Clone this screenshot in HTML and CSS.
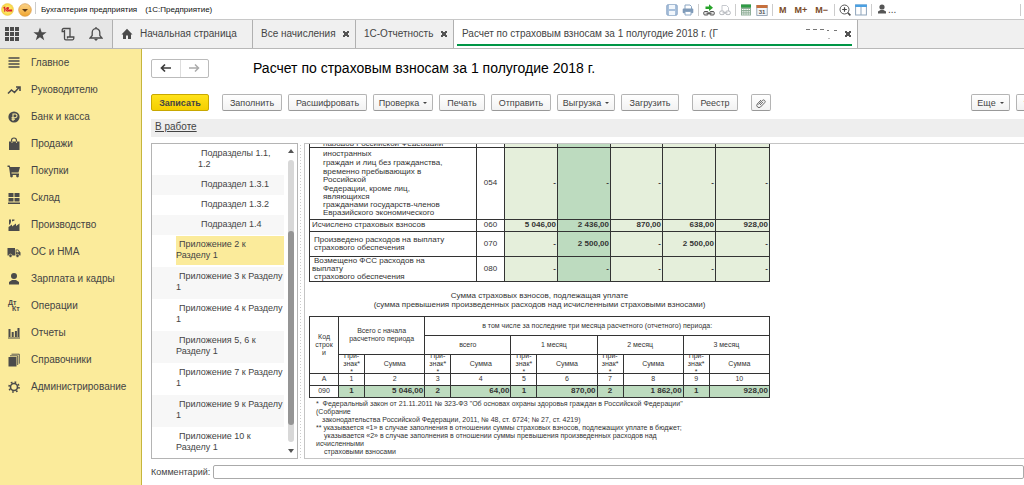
FILE: index.html
```html
<!DOCTYPE html>
<html lang="ru">
<head>
<meta charset="utf-8">
<title>Бухгалтерия предприятия</title>
<link rel="stylesheet" href="styles.css">
</head>
<body>
<header class="titlebar">
  <svg class="logo" viewBox="0 0 14 14"><defs><radialGradient id="gy"><stop offset="0" stop-color="#fff59a"/><stop offset="1" stop-color="#f8d53a"/></radialGradient><linearGradient id="go" x2="0" y2="1"><stop offset="0" stop-color="#fbd48a"/><stop offset="1" stop-color="#f0a52f"/></linearGradient></defs><circle cx="7" cy="7" r="6.5" fill="url(#gy)" stroke="#ecc75a" stroke-width=".6"/><path d="M2.500 5.600L4 4.600V9.300M8.600 5.600A1.900 1.900 0 1 0 7.600 8.700H12M8.300 6.400a.8.8 0 1 0-.6 1.100H12" fill="none" stroke="#d8202a" stroke-width="1.1"/></svg>
  <button class="menu-btn" aria-label="Главное меню"><svg viewBox="0 0 14 14"><circle cx="7" cy="7" r="6.3" fill="url(#go)" stroke="#d99a48" stroke-width=".7"/><path d="M4 6h6L7 9z" fill="#5c3a17"/></svg></button>
  <i class="bar"></i>
  <span class="app-name">Бухгалтерия предприятия</span><span class="app-kind">(1С:Предприятие)</span>
  <div class="sys-tools">
    <button aria-label="Сохранить"><svg viewBox="0 0 12 12"><rect x=".8" y=".8" width="10.4" height="10.4" rx="1" fill="#a9c1dc" stroke="#8aa6c6"/><path d="M3 1h6v4H3zM3 7h6v4H3z" fill="#f2f7fc"/></svg></button>
    <button aria-label="Печать"><svg viewBox="0 0 12 12"><path d="M3 5V1h5l1.500 1.500V5" fill="#fff" stroke="#8ba6c3"/><rect x=".7" y="4.600" width="10.600" height="4.600" rx="1" fill="#7f9ab8"/><path d="M3 7.500h6v3.500H3z" fill="#fff" stroke="#8ba6c3"/></svg></button>
    <i class="bar"></i>
    <button aria-label="Ссылка"><svg viewBox="0 0 12 12"><path d="M2.500 2.500h3.500V.2L10 3.700 6 7V5H2.500z" fill="#27a32a"/><rect x=".7" y="7.500" width="4.600" height="3.500" rx="1.200" fill="#ddd" stroke="#555"/><rect x="6.700" y="7.500" width="4.600" height="3.500" rx="1.200" fill="#ddd" stroke="#555"/><path d="M3.500 9.300h5" stroke="#555"/></svg></button>
    <button aria-label="Открыть ссылку"><svg viewBox="0 0 12 12"><path d="M3 7V1.500h4.500L9.500 3.500V7" fill="#fff" stroke="#c6c9ce"/><rect x=".7" y="7" width="4.600" height="3.600" rx="1.400" fill="none" stroke="#b3b6bb"/><rect x="6.700" y="7" width="4.600" height="3.600" rx="1.400" fill="none" stroke="#b3b6bb"/><path d="M3.500 8.800h5" stroke="#b3b6bb"/></svg></button>
    <i class="bar"></i>
    <button aria-label="Калькулятор"><svg viewBox="0 0 12 12"><rect x="1" y=".5" width="10" height="11" fill="#8fae97"/><path d="M1 .5h10v3H1z" fill="#2e9b45"/><path d="M2 5.500h8M2 7.800h8M2 10h8" stroke="#fff" stroke-dasharray="1.500 .7"/></svg></button>
    <button aria-label="Календарь"><svg viewBox="0 0 12 12"><rect x=".8" y="1.500" width="10.400" height="10" fill="#f4f7fa" stroke="#8496a8" stroke-width=".8"/><path d="M.5 1h11v3H.5z" fill="#c66f3c"/><text x="6" y="10.300" class="cal">31</text></svg></button>
    <i class="bar"></i>
    <button class="mem">M</button><button class="mem">M+</button><button class="mem">M−</button>
    <i class="bar"></i>
    <button aria-label="Масштаб"><svg viewBox="0 0 12 12"><circle cx="5.500" cy="5.500" r="4.500" fill="none" stroke="#555"/><path d="M3.200 5.500h4.600M5.500 3.200v4.600" stroke="#444" stroke-width="1.200"/><path d="M8.800 8.800l2.600 2.600" stroke="#444" stroke-width="1.600"/></svg></button>
    <button aria-label="Окна"><svg viewBox="0 0 12 12"><rect x=".6" y="1" width="10.800" height="10" fill="#fff" stroke="#8fa5bb"/><path d="M.1.500h11.800v2.500H.1z" fill="#4aa0e2"/><path d="M6 3v8" stroke="#8fa5bb"/></svg></button>
    <i class="bar"></i>
    <button class="user"><svg viewBox="0 0 12 12"><circle cx="6" cy="4" r="2.600" fill="#555"/><path d="M2 10.500V8.500L4.500 7h3L10 8.500v2z" fill="#555"/></svg>...</button>
    <i class="bar"></i>
  </div>
</header>
<nav class="tabs">
  <div class="quick">
    <button aria-label="Разделы"><svg viewBox="0 0 14 14" fill="#4b4b4b"><path d="M0 0h4v4H0zM5 0h4v4H5zM10 0h4v4h-4zM0 5h4v4H0zM5 5h4v4H5zM10 5h4v4h-4zM0 10h4v4H0zM5 10h4v4H5zM10 10h4v4h-4z"/></svg></button>
    <button aria-label="Избранное"><svg viewBox="0 0 14 14" fill="#4b4b4b"><path d="M7 .5l1.700 4.700h4.900L9.700 8.200l1.500 5L7 10.200l-4.200 3 1.500-5L.4 5.200h4.900z"/></svg></button>
    <button aria-label="История"><svg viewBox="0 0 14 14" fill="none" stroke="#4b4b4b" stroke-width="1.300"><path d="M3.500 4.500H1.200V3a1.500 1.500 0 0 1 1.500-1.500H9V10M3.500 3v8.500a1.300 1.300 0 0 0 1.300 1.300h6.500a1.500 1.500 0 0 0 1.500-1.500V10H6.500v1.500"/></svg></button>
    <button aria-label="Уведомления"><svg viewBox="0 0 14 14" fill="none" stroke="#4b4b4b" stroke-width="1.300"><path d="M1 11h12L10.800 8.500V5.500a3.800 3.800 0 0 0-7.600 0v3zM7 0v2"/><path d="M5 12h4L7 14z" fill="#4b4b4b" stroke="none"/></svg></button>
  </div>
  <a class="tab home" href="#"><svg viewBox="0 0 12 12"><path d="M6 .8L.5 6.500H2V11h3V7.500h2V11h3V6.500h1.500z" fill="#4b4b4b"/></svg>Начальная страница</a>
  <div class="tab t2"><a href="#">Все начисления</a><button class="x" aria-label="Закрыть"></button></div>
  <div class="tab t3"><a href="#">1С-Отчетность</a><button class="x" aria-label="Закрыть"></button></div>
  <div class="tab active"><a href="#">Расчет по страховым взносам за 1 полугодие 2018 г. (Г</a><svg class="smudge" viewBox="0 0 36 12"><path d="M1 1.500h4M8 1.500h4M15 1.500h4M22 2.500h2M29 2.500h3" stroke="#777"/><path d="M24 10v1" stroke="#777"/></svg><button class="x" aria-label="Закрыть"></button></div>
</nav>
<div class="work">
  <nav class="side">
    <a href="#"><svg viewBox="0 0 14 14" stroke="#4b4b4b" stroke-width="1.500"><path d="M1.500 2h11M1.500 5h11M1.500 8h11M1.500 11h11"/></svg>Главное</a>
    <a href="#"><svg viewBox="0 0 14 14" fill="none" stroke="#4b4b4b" stroke-width="1.600"><path d="M1 10.500L4.500 7l3 2.500L12 4.500M9 4h4v4"/></svg>Руководителю</a>
    <a href="#"><svg viewBox="0 0 14 14"><circle cx="7" cy="7" r="5.600" fill="#4b4b4b"/><path d="M6 11V4h2.200a1.800 1.800 0 0 1 0 3.700H4.500M4.500 9.300H8" fill="none" stroke="#fbeb9b" stroke-width="1.100"/></svg>Банк и касса</a>
    <a href="#"><svg viewBox="0 0 14 14"><path d="M2 4.500h10.500V13H2z" fill="#4b4b4b"/><path d="M4.500 6V3.500a2.500 2.500 0 0 1 5 0V6" fill="none" stroke="#4b4b4b" stroke-width="1.200"/><path d="M5 6V4.600M9.500 6V4.600" stroke="#fbeb9b" stroke-width=".8"/></svg>Продажи</a>
    <a href="#"><svg viewBox="0 0 14 14"><path d="M.5 1.500h2.200L3.200 3H13l-1.500 5.500H4.500v1H12V11H3.200L2 3H.5z" fill="#4b4b4b"/><circle cx="4.500" cy="12" r="1.400" fill="#4b4b4b"/><circle cx="10.500" cy="12" r="1.400" fill="#4b4b4b"/></svg>Покупки</a>
    <a href="#"><svg viewBox="0 0 14 14" fill="#4b4b4b"><path d="M1.500 2h5v4h-5zM7.500 2h5v4h-5zM1.500 7h5v3.500h-5zM7.500 7h5v3.500h-5zM1 11.500h12V13H1z"/></svg>Склад</a>
    <a href="#"><svg viewBox="0 0 14 14" fill="#4b4b4b"><path d="M1.500 13V9l3.500-2.500V8.500L9 5.500V8l3.500-2.500V13zM2 6.500V1.500h2v2.500L3 6.500zM5 3.500V1.500h2.500v1z"/></svg>Производство</a>
    <a href="#"><svg viewBox="0 0 14 14" fill="#4b4b4b"><path d="M.5 3h7.500v7.500H.5zM8.600 4.500H11l2.500 3v3H8.600z"/><circle cx="3.500" cy="10.800" r="1.700" stroke="#fbeb9b" stroke-width=".6"/><circle cx="10.500" cy="10.800" r="1.700" stroke="#fbeb9b" stroke-width=".6"/><path d="M9.500 5.300h1.200l1.300 2H9.500z" fill="#fbeb9b"/></svg>ОС и НМА</a>
    <a href="#"><svg viewBox="0 0 14 14" fill="#4b4b4b"><circle cx="7" cy="4" r="3"/><path d="M2 12.500V10L5 8h4l3 2v2.500z"/></svg>Зарплата и кадры</a>
    <a href="#"><svg viewBox="0 0 14 14" class="dk"><text x="1" y="6">Дт</text><text x="5" y="12">Кт</text></svg>Операции</a>
    <a href="#"><svg viewBox="0 0 14 14" fill="#4b4b4b"><path d="M1.500 3h2v8h-2zM4.700 6h2v5h-2zM7.900 5h2v6h-2zM10.500 2h2v9h-2zM1 11.500h12v1H1z"/></svg>Отчеты</a>
    <a href="#"><svg viewBox="0 0 14 14" fill="#4b4b4b"><path d="M1.500 4h8v9.500h-8z"/><path d="M3 2.800h7.700V12M4.500 1.200h7.800v9.500" fill="none" stroke="#4b4b4b" stroke-width=".9"/></svg>Справочники</a>
    <a href="#"><svg viewBox="0 0 14 14" fill="none" stroke="#4b4b4b"><circle cx="7" cy="7" r="3.500" stroke-width="1.600"/><circle cx="7" cy="7" r="5" stroke-width="1.600" stroke-dasharray="1.700 2.227"/></svg>Администрирование</a>
  </nav>
  <main class="main">
    <div class="heading">
      <div class="nav-btns"><button aria-label="Назад"><svg viewBox="0 0 12 10"><path d="M1 5h10M5 1.500L1.500 5 5 8.500" fill="none" stroke="#3c3c3c" stroke-width="1.700"/></svg></button><button aria-label="Вперед"><svg viewBox="0 0 12 10"><path d="M1 5h10M7 1.500L10.500 5 7 8.500" fill="none" stroke="#ababab" stroke-width="1.500"/></svg></button></div>
      <h1>Расчет по страховым взносам за 1 полугодие 2018 г.</h1>
    </div>
    <div class="toolbar">
      <button class="btn primary w58">Записать</button>
      <button class="btn w60 wide-gap">Заполнить</button>
      <button class="btn w78">Расшифровать</button>
      <button class="btn w60">Проверка<i class="caret"></i></button>
      <button class="btn w45">Печать</button>
      <button class="btn w60">Отправить</button>
      <button class="btn w58">Выгрузка<i class="caret"></i></button>
      <button class="btn w58">Загрузить</button>
      <button class="btn w45 wide-gap">Реестр</button>
      <button class="btn w20 wide-gap" aria-label="Файлы"><svg viewBox="0 0 10 10"><path d="M2.500 6.500l3.800-4a1.600 1.600 0 0 1 2.400 2.200L4.500 9A2.200 2.200 0 0 1 1.300 6L5 2M4 7l3-3.200" fill="none" stroke="#666" stroke-width="1"/></svg></button>
      <button class="btn more">Еще<i class="caret"></i></button>
      <button class="btn help">?</button>
    </div>
    <div class="status"><a href="#">В работе</a></div>
    <div class="panes">
      <section class="tree">
        <ul>
          <li class="l2 first">Подразделы 1.1,<br>1.2</li>
          <li class="l2 one alt">Подраздел 1.3.1</li>
          <li class="l2 one">Подраздел 1.3.2</li>
          <li class="l2 one alt">Подраздел 1.4</li>
          <li class="sel"><span>Приложение 2 к<br>Разделу 1</span></li>
          <li class="alt">Приложение 3 к Разделу<br>1</li>
          <li>Приложение 4 к Разделу<br>1</li>
          <li class="alt">Приложения 5, 6 к<br>Разделу 1</li>
          <li>Приложение 7 к Разделу<br>1</li>
          <li class="alt">Приложение 9 к Разделу<br>1</li>
          <li>Приложение 10 к<br>Разделу 1</li>
        </ul>
        <div class="scroll"><i class="up"></i><div class="track"><div class="thumb"></div></div><i class="down"></i></div>
      </section>
      <div class="splitter"></div>
      <section class="doc">
        <table class="grid first-grid">
          <colgroup><col class="c167"><col class="c28"><col class="c53"><col class="c53"><col class="c52"><col class="c53"><col class="c54"></colgroup>
          <tr class="cut"><td><div class="clip">народов Российской Федерации</div></td><td></td><td class="g"></td><td class="d"></td><td class="g"></td><td class="g"></td><td class="g"></td></tr>
          <tr class="r72"><td class="deep"><p>иностранных</p><p>граждан и лиц без гражданства,</p><p>временно пребывающих в<br>Российской</p><p>Федерации, кроме лиц,<br>являющихся<br>гражданами государств-членов<br>Евразийского экономического</p></td><td class="mid">054</td><td class="g">-</td><td class="d">-</td><td class="g">-</td><td class="g">-</td><td class="g">-</td></tr>
          <tr class="r12"><td>Исчислено страховых взносов</td><td class="mid">060</td><td class="g">5 046,00</td><td class="d">2 436,00</td><td class="g">870,00</td><td class="g">638,00</td><td class="g">928,00</td></tr>
          <tr class="r25"><td class="in">Произведено расходов на выплату<br>страхового обеспечения</td><td class="mid">070</td><td class="g">-</td><td class="d">2 500,00</td><td class="g">-</td><td class="g">2 500,00</td><td class="g">-</td></tr>
          <tr class="r25"><td class="in hang"><span>Возмещено ФСС расходов на</span><br>выплату<br><span>страхового обеспечения</span></td><td class="mid">080</td><td class="g">-</td><td class="d">-</td><td class="g">-</td><td class="g">-</td><td class="g">-</td></tr>
        </table>
        <p class="caption">Сумма страховых взносов, подлежащая уплате<br>(сумма превышения произведенных расходов над исчисленными страховыми взносами)</p>
        <table class="grid second-grid">
          <colgroup><col class="c29"><col class="c26"><col class="c60"><col class="c26"><col class="c60"><col class="c26"><col class="c60"><col class="c26"><col class="c60"><col class="c26"><col class="c60"></colgroup>
          <tr class="r19"><th rowspan="3">Код<br>строк<br>и</th><th colspan="2" rowspan="2">Всего с начала<br>расчетного периода</th><th colspan="8">в том числе за последние три месяца расчетного (отчетного) периода:</th></tr>
          <tr class="r19"><th colspan="2">всего</th><th colspan="2">1 месяц</th><th colspan="2">2 месяц</th><th colspan="2">3 месяц</th></tr>
          <tr class="r19"><th><div class="sign">При-<br>знак*<br>*</div></th><th>Сумма</th><th><div class="sign">При-<br>знак*<br>*</div></th><th>Сумма</th><th><div class="sign">При-<br>знак*<br>*</div></th><th>Сумма</th><th><div class="sign">При-<br>знак*<br>*</div></th><th>Сумма</th><th><div class="sign">При-<br>знак*<br>*</div></th><th>Сумма</th></tr>
          <tr class="r12"><th>А</th><th>1</th><th>2</th><th>3</th><th>4</th><th>5</th><th>6</th><th>7</th><th>8</th><th>9</th><th>10</th></tr>
          <tr class="r12"><th>090</th><td class="d c">1</td><td class="d">5 046,00</td><td class="d c">2</td><td class="d">64,00</td><td class="d c">1</td><td class="d">870,00</td><td class="d c">2</td><td class="d">1 862,00</td><td class="d c">1</td><td class="d">928,00</td></tr>
        </table>
        <div class="notes">
          <p>*&nbsp; Федеральный закон от 21.11.2011 № 323-ФЗ "Об основах охраны здоровья граждан в Российской Федерации"<br>(Собрание</p>
          <p class="n1">законодательства Российской Федерации, 2011, № 48, ст. 6724; № 27, ст. 4219)</p>
          <p>** указывается «1» в случае заполнения в отношении суммы страховых взносов, подлежащих уплате в бюджет;</p>
          <p class="n2">указывается «2» в случае заполнения в отношении суммы превышения произведенных расходов над</p>
          <p>исчисленными</p>
          <p class="n2">страховыми взносами</p>
        </div>
      </section>
    </div>
    <div class="comment"><label for="comment">Комментарий:</label><input id="comment" type="text"></div>
  </main>
</div>
</body>
</html>
```
FILE: styles.css
```css
* { box-sizing: border-box; }
html, body { height: 100%; }
body { margin: 0; display: flex; flex-direction: column; overflow: hidden; background: #fff; color: #444; font: 10px/14px "Liberation Sans", Arial, sans-serif; }
a { color: inherit; text-decoration: none; }
button { font: inherit; color: inherit; border: 0; background: none; padding: 0; margin: 0; }
svg { display: block; }
p, h1, ul { margin: 0; padding: 0; }

.titlebar { flex: none; display: flex; align-items: center; height: 19px; padding: 0 3px 0 1px; }
.logo { width: 13px; height: 13px; }
.menu-btn { margin-left: 4px; }
.menu-btn svg { width: 14px; height: 14px; }
.bar { width: 1px; height: 12px; background: #ccc; }
.titlebar > .bar { margin: 0 5px 4px 3px; }
.app-name, .app-kind { font-size: 8px; color: #111; }
.app-kind { margin-left: 8px; }
.sys-tools { margin-left: auto; display: flex; align-items: center; gap: 4px; }
.sys-tools svg { width: 12px; height: 12px; }
.cal { font-size: 6px; font-weight: bold; text-anchor: middle; fill: #555; }
.mem { margin: 0 2px; font-size: 9px; font-weight: bold; color: #7a4a28; }
.user { display: flex; width: 140px; }

.tabs { flex: none; display: flex; height: 30px; background: #f0f0f0; border-top: 1px solid #c8c8c8; border-bottom: 1px solid #b8b8b8; }
.quick { display: flex; align-items: center; gap: 14px; width: 113px; padding-left: 5px; background: #e6e6e6; border-right: 1px solid #b0b0b0; }
.quick svg { width: 14px; height: 14px; }
.tab { display: flex; align-items: center; justify-content: space-between; padding: 0 6px 0 8px; border-right: 1px solid #b0b0b0; white-space: nowrap; }
.home { width: 140px; justify-content: flex-start; gap: 7px; }
.home svg { width: 12px; height: 12px; }
.t2 { width: 103px; }
.t3 { width: 98px; }
.active { width: 404px; background: linear-gradient(#009646, #009646) 3px 24px / 395px 2px no-repeat #fff; }
.smudge { width: 36px; height: 12px; margin-left: auto; margin-right: 4px; }
.x { width: 6px; height: 6px; background: linear-gradient(45deg, transparent 40%, #555 40% 60%, transparent 60%), linear-gradient(-45deg, transparent 40%, #555 40% 60%, transparent 60%); }

.work { flex: 1; display: flex; min-height: 0; }
.side { flex: none; width: 142px; background: #fbeb9b; border-right: 1px solid #c6b63c; }
.side a { display: flex; align-items: center; gap: 10px; height: 27px; padding-left: 7px; }
.side svg { width: 14px; height: 14px; }
.dk { font-size: 7px; font-weight: bold; fill: #4b4b4b; }

.main { flex: 1; min-width: 0; display: flex; flex-direction: column; padding-left: 9px; }
.heading { display: flex; align-items: center; height: 38px; gap: 44px; }
.nav-btns { display: flex; width: 58px; height: 19px; border: 1px solid #bbb; border-radius: 2px; }
.nav-btns button { flex: 1; display: grid; place-items: center; }
.nav-btns button + button { border-left: 1px solid #ddd; }
.nav-btns svg { width: 12px; height: 10px; }
h1 { font-size: 14px; line-height: 18px; font-weight: normal; color: #000; }
.toolbar { display: flex; gap: 6px; height: 32px; padding-top: 7px; overflow: hidden; }
.btn { flex: none; display: flex; align-items: center; justify-content: center; height: 17px; border: 1px solid #b4b4b4; border-bottom-color: #999; border-radius: 2px; background: linear-gradient(#fff, #f2f2f2); font-size: 9px; }
.btn svg { width: 10px; height: 10px; }
.primary { background: linear-gradient(#ffe21a, #f5cf00); border-color: #c8a800; font-weight: bold; }
.w58 { width: 58px; } .w60 { width: 60px; } .w78 { width: 79px; } .w45 { width: 46px; } .w20 { width: 20px; }
.wide-gap { margin-left: 7px; }
.caret { margin-left: 4px; border: 2px solid transparent; border-top-color: #444; border-bottom: 0; }
.more { margin-left: auto; width: 39px; }
.help { width: 20px; margin-right: -12px; }
.status { height: 18px; padding: 1px 4px; background: #eee; }
.status a { text-decoration: underline; }

.panes { flex: 1; min-height: 0; display: flex; margin-top: 6px; }
.tree { flex: none; width: 147px; display: flex; border: 1px solid #b4b4b4; overflow: hidden; }
.tree ul { flex: 1; min-width: 0; list-style: none; }
.tree li { height: 32px; padding: 4px 0 0 24px; font-size: 9px; line-height: 11px; white-space: nowrap; text-indent: 3px; }
.tree .l2 { padding-left: 46px; }
.tree .one { height: 20px; }
.tree .first { height: 31px; }
.tree .alt { background: #f7f7f7; }
.tree .sel { padding-top: 1px; }
.sel span { display: block; height: 29px; padding-top: 3px; background: #fbeb9b; }
.scroll { flex: none; width: 13px; display: flex; flex-direction: column; align-items: center; padding: 5px 0; }
.up, .down { border: 3px solid transparent; }
.up { border-top: 0; border-bottom: 4px solid #555; }
.down { border-bottom: 0; border-top: 4px solid #555; }
.track { flex: 1; width: 6px; margin: 7px 0; padding-top: 71px; background: #d8d8d8; border-radius: 3px; }
.thumb { height: 92%; background: #959595; border-radius: 3px; }
.splitter { flex: none; width: 6px; background: radial-gradient(#ccc 1px, transparent 1px) 0 0 / 3px 3px; border: 1px solid #fff; }
.doc { flex: 1; min-width: 0; border: 1px solid #c4c4c4; border-right: 0; padding-left: 4px; overflow: hidden; font-size: 8px; line-height: 8px; color: #333; }
.grid { table-layout: fixed; border-collapse: collapse; width: 461px; }
.grid td, .grid th { border: 1px solid #333; padding: 0 2px; font-weight: normal; text-align: left; overflow: hidden; white-space: nowrap; }
.grid .g, .grid .d { background: #e5efdb; text-align: right; font-weight: bold; padding: 0 1px; }
.grid .d { background: #bddbbf; }
.grid th, .grid .mid { text-align: center; padding: 0; }
.grid .c { text-align: center; }
.grid th { font-size: 7px; }
.first-grid { border-top: hidden; }
.cut { height: 3px; }
.clip { display: flex; align-items: flex-end; height: 2px; padding-left: 11px; line-height: 5px; overflow: hidden; }
.grid .deep { padding-left: 13px; }
.deep p + p { margin-top: 1px; }
.grid .in { padding-left: 4px; }
.grid .hang { padding-left: 2px; }
.hang span { padding-left: 2px; }
.r72 { height: 72px; } .r12 { height: 12px; } .r25 { height: 25px; } .r19 { height: 19px; }
.c167 { width: 167px; } .c28 { width: 28px; } .c52 { width: 52px; } .c53 { width: 53px; } .c54 { width: 54px; }
.c29 { width: 29px; } .c26 { width: 26px; } .c60 { width: 60px; }
.caption { width: 461px; margin: 9px 0 7px; text-align: center; line-height: 9px; }
.sign { height: 18px; display: flex; align-items: center; justify-content: center; overflow: hidden; }
.notes { padding: 2px 0 0 7px; font-size: 7px; white-space: nowrap; }
.n1 { padding-left: 6px; }
.n2 { padding-left: 8px; }
.comment { flex: none; display: flex; align-items: center; gap: 3px; height: 26px; font-size: 9px; }
.comment input { flex: 1; height: 14px; border: 1px solid #aaa; border-radius: 2px; }
```
